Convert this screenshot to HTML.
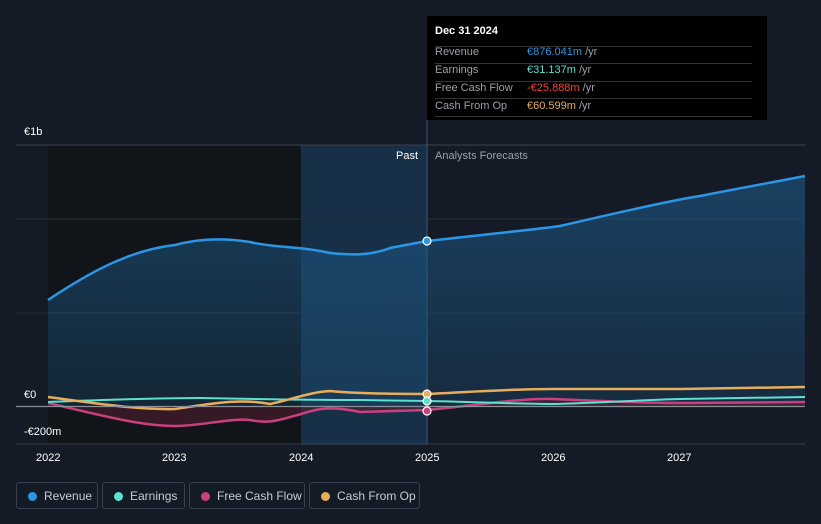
<!DOCTYPE html><html><head><style>
body{margin:0;width:821px;height:524px;background:#151b26;font-family:"Liberation Sans",sans-serif;overflow:hidden;position:relative}
.t{position:absolute;color:#fff;font-size:11px}
.lg{position:absolute;top:482px;height:27px;border:1px solid #3a404b;border-radius:3px;color:#c8ccd2;font-size:12px;line-height:27px;box-sizing:border-box;padding-left:27px}
.lg i{position:absolute;left:11px;top:9px;width:9px;height:9px;border-radius:50%}
</style></head><body>
<svg width="821" height="524" style="position:absolute;left:0;top:0">
<defs><linearGradient id="g" x1="0" x2="0" y1="0" y2="1"><stop offset="0" stop-color="#1d5a8a" stop-opacity=".6"/><stop offset="1" stop-color="#1d5a8a" stop-opacity=".25"/></linearGradient></defs>
<rect x="48" y="145" width="379" height="300" fill="#111519"/>
<rect x="301" y="145" width="126" height="300" fill="#173047"/>
<line x1="16" y1="145" x2="805" y2="145" stroke="#3a404b"/>
<line x1="16" y1="219" x2="805" y2="219" stroke="#262c36"/>
<line x1="16" y1="313" x2="805" y2="313" stroke="#262c36"/>
<line x1="16" y1="444" x2="805" y2="444" stroke="#3a404b"/>
<line x1="427" y1="120" x2="427" y2="444" stroke="#3a5a78"/>
<path d="M48,300 C90,272 130,250 175,245 C200,238 225,238 250,242 C275,248 300,246 330,253 C350,255 370,256 390,248 L427,241 C480,235 540,229 560,226 C620,212 680,199 700,196 C740,188 780,181 805,176 L805,406 L48,406Z" fill="url(#g)"/>
<path d="M48,300 C90,272 130,250 175,245 C200,238 225,238 250,242 C275,248 300,246 330,253 C350,255 370,256 390,248 L427,241 C480,235 540,229 560,226 C620,212 680,199 700,196 C740,188 780,181 805,176" fill="none" stroke="#2b96e6" stroke-width="2.5"/>
<path d="M48,403 C100,415 140,426 175,426 C200,426 230,418 250,420 C270,424 280,420 301,414 C320,408 330,406 360,412 L427,410 C470,406 520,398 553,399 C600,401 640,403 680,403 L805,402 L805,406 L48,406Z" fill="#5a1e30" opacity=".5"/>
<path d="M48,403 C100,415 140,426 175,426 C200,426 230,418 250,420 C270,424 280,420 301,414 C320,408 330,406 360,412 L427,410 C470,406 520,398 553,399 C600,401 640,403 680,403 L805,402" fill="none" stroke="#c9407f" stroke-width="2.5"/>
<path d="M48,402 C100,400 150,398 200,398 C250,399 300,400 360,400 L427,401 C480,402 520,404 553,404 C600,403 640,400 680,399 L805,397" fill="none" stroke="#5ce0d0" stroke-width="2"/>
<path d="M48,397 C100,404 140,410 175,409 C210,404 240,398 270,404 C290,400 310,392 330,391 C350,393 380,394 427,394 C470,392 510,389 553,389 L680,389 L805,387" fill="none" stroke="#e8ad5a" stroke-width="2.5"/>
<line x1="16" y1="406.5" x2="805" y2="406.5" stroke="#8a8e96" stroke-width="1.2"/>
<circle cx="427" cy="241" r="4" fill="#2b96e6" stroke="#fff" stroke-width="1.2"/>
<circle cx="427" cy="394" r="4" fill="#e8ad5a" stroke="#fff" stroke-width="1.2"/>
<circle cx="427" cy="401" r="4" fill="#5ce0d0" stroke="#fff" stroke-width="1.2"/>
<circle cx="427" cy="411" r="4" fill="#c9407f" stroke="#fff" stroke-width="1.2"/>
</svg>
<div class="t" style="left:24px;top:126px">€1b</div>
<div class="t" style="left:24px;top:389px">€0</div>
<div class="t" style="left:24px;top:426px">-€200m</div>
<div class="t" style="left:396px;top:150px;color:#fff">Past</div>
<div class="t" style="left:435px;top:150px;color:#9aa0a8">Analysts Forecasts</div>
<div class="t" style="left:36px;top:452px">2022</div>
<div class="t" style="left:162px;top:452px">2023</div>
<div class="t" style="left:289px;top:452px">2024</div>
<div class="t" style="left:415px;top:452px">2025</div>
<div class="t" style="left:541px;top:452px">2026</div>
<div class="t" style="left:667px;top:452px">2027</div>
<div style="position:absolute;left:427px;top:16px;width:340px;height:104px;background:#000;font-size:11px">
<div style="position:absolute;left:8px;top:9px;color:#fff;font-weight:bold">Dec 31 2024</div>
<div style="position:absolute;left:8px;top:30px;width:317px;border-top:1px solid #333"></div>
<div style="position:absolute;left:8px;top:47px;width:317px;border-top:1px solid #333"></div>
<div style="position:absolute;left:8px;top:65px;width:317px;border-top:1px solid #333"></div>
<div style="position:absolute;left:8px;top:82px;width:317px;border-top:1px solid #333"></div>
<div style="position:absolute;left:8px;top:100px;width:317px;border-top:1px solid #333"></div>
<div style="position:absolute;left:8px;top:27px;line-height:18px;color:#9aa0a8">Revenue<br>Earnings<br>Free Cash Flow<br>Cash From Op</div>
<div style="position:absolute;left:100px;top:27px;line-height:18px;color:#9aa0a8"><span style="color:#2b96e6">€876.041m</span> /yr<br><span style="color:#5ce0d0">€31.137m</span> /yr<br><span style="color:#f0403c">-€25.888m</span> /yr<br><span style="color:#e8ad5a">€60.599m</span> /yr</div>
</div>
<div class="lg" style="left:16px;width:82px"><i style="background:#2b96e6"></i>Revenue</div>
<div class="lg" style="left:102px;width:83px"><i style="background:#5ce0d0"></i>Earnings</div>
<div class="lg" style="left:189px;width:116px"><i style="background:#c9407f"></i>Free Cash Flow</div>
<div class="lg" style="left:309px;width:111px"><i style="background:#e8ad5a"></i>Cash From Op</div>
</body></html>
